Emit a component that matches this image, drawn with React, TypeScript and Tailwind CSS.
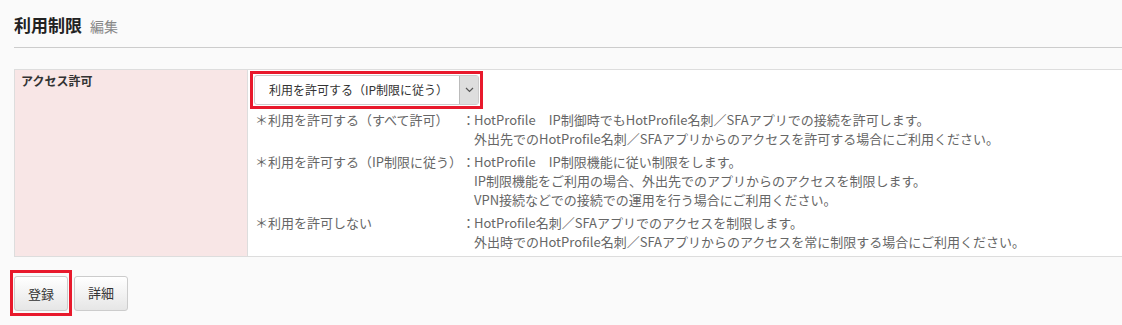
import { useState } from "react";

const rules = [
  {
    label: "＊利用を許可する（すべて許可）",
    lines: [
      "HotProfile　IP制御時でもHotProfile名刺／SFAアプリでの接続を許可します。",
      "外出先でのHotProfile名刺／SFAアプリからのアクセスを許可する場合にご利用ください。",
    ],
  },
  {
    label: "＊利用を許可する（IP制限に従う）",
    lines: [
      "HotProfile　IP制限機能に従い制限をします。",
      "IP制限機能をご利用の場合、外出先でのアプリからのアクセスを制限します。",
      "VPN接続などでの接続での運用を行う場合にご利用ください。",
    ],
  },
  {
    label: "＊利用を許可しない",
    lines: [
      "HotProfile名刺／SFAアプリでのアクセスを制限します。",
      "外出時でのHotProfile名刺／SFAアプリからのアクセスを常に制限する場合にご利用ください。",
    ],
  },
];

export default function App() {
  const [value, setValue] = useState("ip");

  return (
    <div
      className="min-h-[325px] w-[1122px] overflow-hidden bg-[#fafafa] pl-[14px] text-[#333]"
      style={{ fontFamily: '"Noto Sans CJK JP", "Noto Sans", sans-serif' }}
    >
      {/* Header */}
      <div className="flex items-baseline gap-[8px] pt-[14px] pb-[10px]">
        <h1 className="text-[17px] leading-[22px] font-bold text-[#222]">利用制限</h1>
        <span className="text-[14px] text-[#888]">編集</span>
      </div>
      <div className="w-[1200px] border-t border-[#cccccc]" />

      {/* Form table */}
      <div className="mt-[21px] flex w-[1200px] border border-[#dddddd] bg-white">
        <div className="w-[233px] shrink-0 border-r border-[#dddddd] bg-[#f8e6e6] px-[6px] py-[3px] text-[12px] leading-[16px] font-bold">
          アクセス許可
        </div>
        <div className="flex-1 pt-[1px] pb-[5px] pl-[2px]">
          <div className="w-[233px] border-[3px] border-[#e8192c] p-[1px]">
            <div className="relative flex h-[30px] items-center rounded-[3px] border border-[#cccccc] bg-white">
              <select
                value={value}
                onChange={(e) => setValue(e.target.value)}
                className="h-full w-full appearance-none bg-transparent pl-[14px] text-[12px] text-[#333] outline-none"
              >
                <option value="all">利用を許可する（すべて許可）</option>
                <option value="ip">利用を許可する（IP制限に従う）</option>
                <option value="none">利用を許可しない</option>
              </select>
              <div className="pointer-events-none absolute top-0 right-0 flex h-full w-[19px] items-center justify-center border-l border-[#bbbbbb] bg-[#dedede]">
                <svg width="9" height="6" viewBox="0 0 9 6" fill="none">
                  <path d="M1 1l3.5 3.5L8 1" stroke="#555" strokeWidth="1.2" />
                </svg>
              </div>
            </div>
          </div>

          <div className="mt-[1px] flex flex-col gap-[4px] pl-[5px] text-[13px] leading-[19px] text-[#666]">
            {rules.map((r) => (
              <div key={r.label} className="flex">
                <div className="w-[207px] shrink-0">{r.label}</div>
                <div className="w-[12px] shrink-0">：</div>
                <div className="flex flex-col">
                  {r.lines.map((l) => (
                    <span key={l}>{l}</span>
                  ))}
                </div>
              </div>
            ))}
          </div>
        </div>
      </div>

      {/* Buttons */}
      <div className="mt-[13px] -ml-[4px] flex items-center gap-[2px]">
        <div className="border-[3px] border-[#e8192c] px-[1px] pt-[3px] pb-[2px]">
          <button className="h-[35px] w-[54px] rounded-[3px] border border-[#cccccc] bg-gradient-to-b from-white to-[#e6e6e6] text-[13px] text-[#333]">
            登録
          </button>
        </div>
        <button className="h-[35px] w-[54px] rounded-[3px] border border-[#cccccc] bg-gradient-to-b from-white to-[#e6e6e6] text-[13px] text-[#333]">
          詳細
        </button>
      </div>
    </div>
  );
}
